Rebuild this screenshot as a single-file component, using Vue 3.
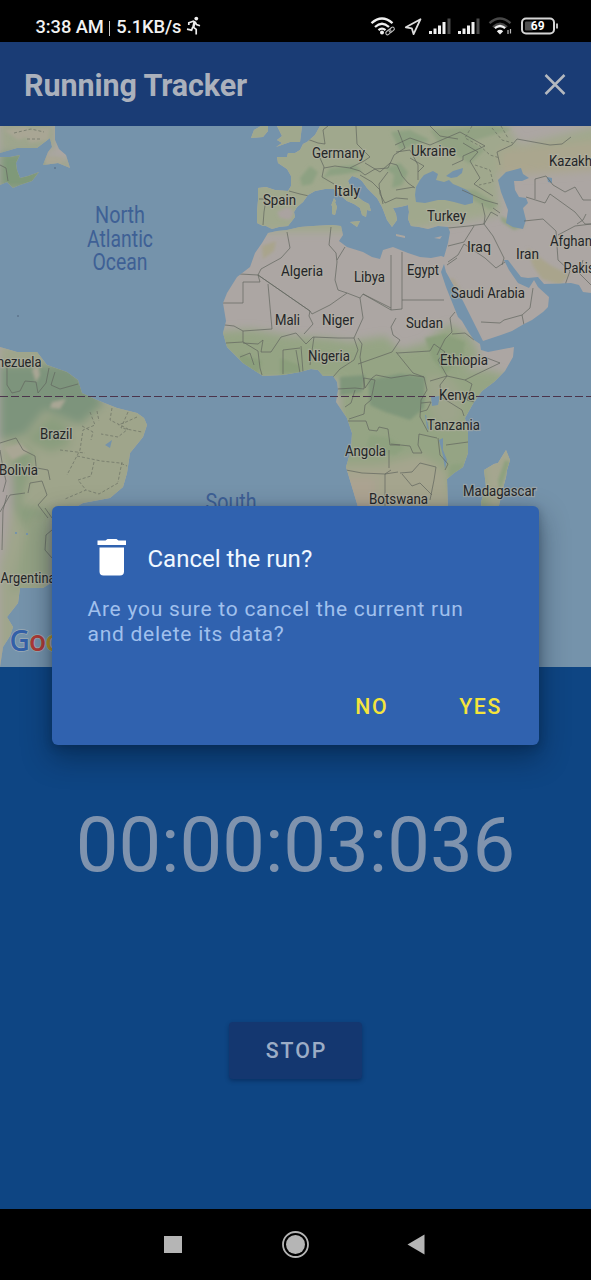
<script setup>
const labels = [
  { t: 'Germany', x: 312, y: 158, w: 53 },
  { t: 'Ukraine', x: 411, y: 156, w: 45 },
  { t: 'Kazakh', x: 549, y: 166, w: 43 },
  { t: 'Italy', x: 334, y: 196, w: 26 },
  { t: 'Spain', x: 263, y: 205, w: 33 },
  { t: 'Turkey', x: 427, y: 221, w: 39 },
  { t: 'Iraq', x: 467, y: 252, w: 24 },
  { t: 'Iran', x: 516, y: 259, w: 23 },
  { t: 'Afghan', x: 550, y: 246, w: 42 },
  { t: 'Pakis', x: 563.5, y: 273, w: 31 },
  { t: 'Algeria', x: 281, y: 276, w: 42 },
  { t: 'Libya', x: 354, y: 282, w: 31 },
  { t: 'Egypt', x: 407, y: 275, w: 32 },
  { t: 'Saudi Arabia', x: 451, y: 298, w: 74 },
  { t: 'Mali', x: 275, y: 325, w: 25 },
  { t: 'Niger', x: 322, y: 325, w: 32 },
  { t: 'Sudan', x: 406, y: 328, w: 37 },
  { t: 'Nigeria', x: 308, y: 361, w: 42 },
  { t: 'Ethiopia', x: 440, y: 365, w: 48 },
  { t: 'Kenya', x: 439, y: 400, w: 36 },
  { t: 'Tanzania', x: 427, y: 430, w: 53 },
  { t: 'Angola', x: 345, y: 456, w: 41 },
  { t: 'Madagascar', x: 463, y: 496, w: 73 },
  { t: 'Botswana', x: 369, y: 504, w: 59 },
  { t: 'nezuela', x: -3, y: 367, w: 44.5 },
  { t: 'Brazil', x: 40, y: 439, w: 32.5 },
  { t: 'Bolivia', x: -1, y: 475, w: 39 },
  { t: 'Argentina', x: 0.5, y: 583, w: 55 },
]
const bars = [
  { x: 0, h: 3 },
  { x: 4.5, h: 5.5 },
  { x: 9, h: 8.5 },
  { x: 13.5, h: 12 },
  { x: 18.5, h: 15.5, off: true },
]
</script>

<template>
  <div class="phone">
    <header class="status">
      <span class="clock">3:38 AM<i></i>5.1KB/s</span>
      <svg class="runner" width="16" height="20" viewBox="0 0 16 20" fill="none" stroke="#eee" stroke-width="1.7">
        <circle cx="10.3" cy="2.6" r="1.9" fill="#eee" stroke="none" />
        <path d="M2.8 9V6.8L7.4 5.2 9.4 6.4 10.5 8.6 14 9.7M8.2 5.6 7 11 10.2 13.4V18.6M6.6 11.2 5.6 14.2 1 13.2M8.6 7 7.8 11" />
      </svg>
      <svg class="indicators" width="190" height="22" viewBox="0 0 190 22">
        <g fill="none" stroke="#f0f0f0" stroke-width="2.3">
          <path d="M1.5 7.2Q12-2.2 22.5 7.2M5 11Q12 4.6 19 11M8.5 14.2Q12 11 15.5 14.2" />
          <g stroke-width="1.1" stroke="#bbb">
            <rect x="-3" y="-1.6" width="6" height="3.4" rx="1.7" transform="translate(18.4 16.1) rotate(-40)" />
            <rect x="-3" y="-1.6" width="6" height="3.4" rx="1.7" transform="translate(21.6 13.6) rotate(-40)" />
          </g>
        </g>
        <circle cx="12" cy="16.6" r="2" fill="#f0f0f0" />
        <path d="M50.5 3.2 35.8 11.3 41.8 12.3 43.6 18.2Z" fill="none" stroke="#ddd" stroke-width="1.8" stroke-linejoin="round" />
        <g v-for="s in [59, 88]" :key="s" :transform="`translate(${s} 0)`">
          <rect v-for="b in bars" :key="b.x" :x="b.x" :y="18 - b.h" width="3" :height="b.h" :fill="b.off ? '#4a4a4a' : '#f0f0f0'" />
        </g>
        <g fill="none" stroke-width="2.3">
          <path d="M119.500 7.200Q130-2.200 140.500 7.200M123 11Q130 4.600 137 11" stroke="#484848" />
          <path d="M124.800 12.200Q130 7.800 135.200 12.200" stroke="#eee" />
          <path d="M138 14V18M140.500 13V17.500" stroke="#bbb" stroke-width="1.2" />
        </g>
        <path d="M126.800 15.200Q130 12.500 133.200 15.200L130 18.500Z" fill="#eee" />
        <rect x="152" y="2.500" width="32" height="15" rx="4" fill="none" stroke="#d5d5d5" stroke-width="2" />
        <rect x="155" y="5.500" width="8" height="9" rx="1" fill="#505050" />
        <path d="M187 7.500V12.500" stroke="#ddd" stroke-width="1.700" />
        <text x="167.700" y="14.400" text-anchor="middle" class="battery">69</text>
      </svg>
    </header>

    <div class="toolbar">
      <h1>Running Tracker</h1>
      <svg width="24" height="24" viewBox="0 0 24 24"><path d="M2.500 2 21.500 21M21.500 2 2.500 21" stroke="#b4b9bf" stroke-width="2.500" /></svg>
    </div>

    <svg class="map" width="591" height="541" viewBox="0 126 591 541">
      <defs>
        <clipPath id="land">
          <path d="M268 233 277 231 287 230 300 227 313 226 332 225 341 226 343 235 339 241 347 247 363 252 372 257 380 259 383 250 393 247 408 253 420 257 431 258 441 256 444 257 448 243 450 232 448 227 438 226 428 229 419 227 411 226 408 219 409 212 408 205 400 207 393 208 396 214 397 220 392 227 387 220 384 212 382 207 377 198 372 193 367 188 362 181 358 178 352 176 348 181 352 190 358 197 363 201 369 204 371 211 367 210 366 217 362 215 360 208 354 204 347 201 340 195 334 189 325 189 315 191 308 195 303 202 297 207 294 212 295 217 288 226 279 227 272 229 266 226 263 226 257 223 257 212 258 200 258 188 266 187 275 190 288 191 291 186 291 176 287 169 278 163 277 157 287 157 288 153 295 153 300 150 303 144 307 142 315 135 320 126H591V293L583 292 579 285 571 283 544 284 538 277 528 278 521 277 514 268 508 260 504 260 509 270 518 283 529 288 534 280 538 287 549 297 548 307 543 312 532 320 524 324 512 331 501 335 483 341 480 335 475 325 469 313 463 301 458 293 446 272 444 264 441 272 446 287 454 307 458 317 462 321 469 333 474 340 480 344 481 350 488 352 514 347 513 357 505 371 494 382 482 391 474 402 465 418 468 433 468 453 463 467 454 473 447 479 448 510V560H370L358 507 352 487 346 467 351 450 352 433 347 418 336 402 338 390 337 382 333 376 323 376 318 370 311 369 300 372 283 375 263 376 243 363 227 347 223 333 226 321 223 303 227 293 237 277 250 267 255 253 262 243Z" />
          <path d="M0 347 17 352 37 352 47 365 67 372 78 380 82 393 97 400 117 408 137 413 144 418 147 425 143 437 130 453 127 473 123 487 110 498 83 503 67 512V583H51L43 588H20L18 603 7 617 13 627 10 636 3 647 0 667Z" />
          <path d="M0 126H55V140L59 149 66 155 70 168 58 163 43 165 48 152 52 147 50 138 37 148 17 148 0 153ZM0 157 10 157 20 155 16 163 17 170 20 178 28 176 39 172 32 181 20 185 13 188 7 182 0 185Z" />
          <path d="M251 138 254 130 261 126H268L268 131 263 137ZM277 126H302L301 134 300 142 290 142 276 147 282 143 277 140 282 136Z" />
          <path d="M332 204 335 202 337 207 335 215 332 214ZM350 222 360 221 357 227ZM331 206 334 198 336 201ZM396 234 405 236V238L396 236ZM434 238 442 236 440 239Z" />
          <path d="M506 450 510 460 507 470 506 477 502 492 498 510H482L481 502 486 487 484 470 494 464 498 463Z" />
        </clipPath>
        <filter id="soft" x="-20%" y="-20%" width="140%" height="140%"><feGaussianBlur stdDeviation="4" /></filter>
        <filter id="soft2" x="-20%" y="-20%" width="140%" height="140%"><feGaussianBlur stdDeviation="1.800" /></filter>
      </defs>
      <rect y="126" width="591" height="541" fill="#7593ab" />
      <g clip-path="url(#land)">
        <rect y="126" width="591" height="541" fill="#aca6a3" />
        <g filter="url(#soft)">
          <path d="M200 115H500L520 145 600 125V165L520 165 498 172 500 215 460 222 400 232 330 232 250 232Z" fill="#a0a88d" />
          <path d="M500 150 600 140V170L500 176Z" fill="#aaa68e" />
          <path d="M200 333 250 329 290 336 330 338 350 342 385 336 400 350 425 343 440 330 450 324 470 336 480 355 465 370 490 370 520 380V560H340V380L200 380Z" fill="#95a484" />
          <path d="M425 375 450 378 462 395 460 420 440 430 430 405Z" fill="#9da48b" />
          <path d="M320 466 380 465 420 455 445 470 455 520H340Z" fill="#a5a58e" />
          <path d="M345 478H375V515H350Z" fill="#aca391" />
          <path d="M0 345H60L95 400 155 405V500L50 520V600L0 680Z" fill="#9fa58b" />
          <path d="M0 365H70L105 402 80 425 45 410 25 435 0 440Z" fill="#7d947b" />
          <path d="M50 415 68 425 70 445 50 452 25 440ZM15 440 35 455 20 505 55 510 25 530 10 500Z" fill="#8a9d7e" />
          <path d="M-2 465 12 475 13 500 5 550-2 570Z" fill="#aaa3a0" />
          <path d="M30 515 52 520V580L10 592Z" fill="#94a284" />
          <path d="M0 120H55V150H0ZM40 160H75V170H40Z" fill="#9da58c" />
          <path d="M0 152H42V190H0Z" fill="#7f9979" />
          <path d="M480 445H515V475L500 510H490Z" fill="#a5a68f" />
        </g>
        <g filter="url(#soft2)">
          <path d="M368 380 400 374 425 377 424 408 410 420 385 412 370 405ZM340 377 365 375 362 392 340 396Z" fill="#7f967a" />
          <path d="M425 338 445 334 465 342 463 356 445 374 433 360ZM240 354 262 361 258 374 240 365ZM280 358 300 365 300 373 280 374Z" fill="#8b9f7c" />
          <path d="M322 180 330 168 355 165 362 171 345 174 328 176ZM300 178 310 166 318 172 312 184 302 186ZM385 168 400 163 408 172 402 185 392 188 394 175ZM400 150 430 140 410 130 391 132Z" fill="#8da182" />
          <path d="M430 130 490 126 512 129 470 142 485 150 470 164 440 145ZM457 190 475 190 498 205 490 210ZM500 216 525 226 514 230 502 222Z" fill="#92a283" />
          <path d="M277 212 288 207 294 212 290 220 280 218Z" fill="#aaa3a0" />
          <path d="M262 246 276 241 274 251 263 259ZM527 248 550 265 570 275 560 285 542 279 533 266Z" fill="#a9a48c" />
          <path d="M448 278 454 279 462 292 456 290Z" fill="#a9a391" />
          <path d="M370 435 390 438 405 448 395 455 365 450ZM450 465 464 463 460 475 448 490ZM505 460 510 462 500 492 498 480Z" fill="#8ea17f" />
          <path d="M4 130 26 127 33 135 18 140ZM22 130 50 128 48 140 30 143ZM46 156 64 158 60 164 45 164ZM4 448 20 443 30 452 12 460ZM52 402 66 399 60 409 50 408ZM32 370 38 365 40 375 36 382Z" fill="#a9a694" />
        </g>
        <g fill="#7593ab">
          <path d="M416 202 415 195 416 187 420 180 424 175 433 171 438 174 436 180 444 182 449 180 453 184 458 186 467 190 473 195 473 203 465 205 454 202 445 200 438 200 425 203ZM446 176 453 171 463 168 462 173 457 177 451 178ZM498 180 506 172 521 168 523 174 529 178 522 181 514 181 515 190 519 197 526 198 528 203 523 208 526 220 523 229 513 227 506 223 508 210 501 192ZM547 177 552 178 552 183 548 182Z" />
          <path d="M431 397 440 396 438 405 432 406ZM439 440 443 438 443 450 447 460 445 469 443 456ZM425 415 426 415 429 430 427 428ZM15 532H17V534H15ZM26 533H28V535H26ZM105 445 112 440 110 448Z" />
        </g>
        <g class="borders">
          <path d="M287 232 290 248 281 258 270 264 261 269 258 275 260 282H243V303L223 303M240 274 258 275 310 311 312 314 330 305 347 293 360 298 363 294 391 308M331 227 329 245 336 253 337 262 335 280 338 290 347 293M345 247 337 260M363 294 391 310V255M258 275 310 311 309 316 313 324 304 334M268 284 272 329 243 331M360 298 363 318 354 338 338 338 313 337 306 344 296 333 281 337 271 352 261 352 263 340 258 344 243 343M391 310 402 309V252M402 300H444" />
          <path d="M225 325 234 326 243 331 243 342 226 343M243 342 258 351 260 368 262 375M240 357 250 353 254 365M283 374V350L300 348M296 350 300 373M301 346 303 372M314 337 310 365M354 338 358 350 354 360 340 369 333 377M358 338 362 344 360 357 365 388 372 378 376 375 391 378M358 364 392 352 400 340 393 335 391 327 396 318M337 389 355 388 364 389 364 378 375 380 371 400 365 405 364 414 349 419M348 421H366L369 430 377 431 379 427 388 429 390 445H400M345 407 351 403 355 390M346 470 362 473 385 474 398 472M385 510V474L391 470M389 450V468M391 444 410 446 413 453 422 453 418 445 419 434 437 438" />
          <path d="M396 352 413 373 424 377 427 390 421 400 420 417 428 432M391 378 410 375 424 377M397 353 430 351 434 344 445 352 438 360 447 376 465 380 475 375 500 363 487 358M452 334 465 333 474 340M437 355 445 339 452 332 450 318 455 312M447 376 440 385 441 397 462 410 464 416M465 380 472 384 467 400 474 402M430 381 447 376M446 445 468 442M438 438 440 455 448 464 445 470M400 473 412 472 420 463 436 467 434 480 430 500M402 474 412 486 420 483 432 495M421 403 431 402 427 410 420 412" />
          <path d="M259 199 266 199 264 212 263 225M289 191 300 194 309 196M307 139 318 143 325 144 323 130 328 126M320 158 324 167 322 177 334 184M324 168 335 166 350 168 364 161 370 157 357 144 356 126M350 168 360 171 365 175 375 169 388 168 394 155 405 148 398 130M365 163 380 172 390 163 397 165 402 176 408 183 415 188M360 175 372 182 380 190 383 204M388 172 379 184 380 194 385 203 396 198 408 199M396 190 414 187M396 152 410 150 418 165 418 180M410 158 424 166 418 172M395 145 410 138 430 145 460 132 485 146 463 156 463 160 452 165M430 126 440 136 458 139" />
          <path d="M463 143 478 152 470 161 480 178 474 184 493 196M500 165 497 152 512 145 517 139 550 145 562 144 571 137M462 190 484 200 498 204M482 203 485 216 484 224 493 236 499 248 504 258 502 265M448 228 469 226 484 224M448 246 464 242 474 226M448 262 458 255 464 244 485 258 496 268 505 262M447 265 457 258M484 224 491 212 498 216M493 208 500 213" />
          <path d="M535 199V179L546 176 553 185 565 192 575 187 583 200H591M526 197 545 203 550 194 575 212 585 224H591M524 221 543 219 556 231 558 260 570 271 565 285M558 235 575 226 591 224M583 260 579 273 591 285M504 320 522 315 530 308 533 288M481 322 500 323 504 320M522 315 524 325M577 224 583 220 586 214" />
          <path d="M7 367V385L12 393 20 391 25 381 36 382 38 393 46 383 49 368M55 372 51 385 60 389 78 384M0 443 16 438 23 450 35 456 37 475M0 450 3 468 6 481 3 492M37 468 48 470 50 480M45 508 52 518M28 493 30 483 42 481 47 495 38 505 48 518M0 512 10 495 25 493M7 495 3 510 2 550M52 530 46 535 45 550 52 558M0 165 6 168 8 181" />
        </g>
        <g class="regions">
          <path d="M90 412 95 425 83 430 80 450 67 475M112 408 110 420 128 429 118 437 101 434M128 412 121 428 142 432M97 411 99 421M82 426 93 432 91 440M77 456 101 461 120 463 127 466M94 462 91 476 78 480 86 490 65 499M118 483 99 494 86 490M122 462 118 482M60 450 85 453M137 417 126 422 118 425M472 126 465 138 480 146 490 155 500 158M475 165 490 170 493 182 479 185M492 128 502 140 513 143M501 126 508 138M14 133 31 129 44 132M27 139 40 139" />
        </g>
      </g>
      <path d="M0 396.500H435M476 396.500H591" stroke="#4b344b" stroke-width="1" stroke-dasharray="8 3" />
      <path d="M17 316H19M54 168H56" stroke="#52647c" />
      <g class="ocean">
        <text x="95" y="223" textLength="50" lengthAdjust="spacingAndGlyphs">North</text>
        <text x="87" y="246.500" textLength="66" lengthAdjust="spacingAndGlyphs">Atlantic</text>
        <text x="92.500" y="270" textLength="55" lengthAdjust="spacingAndGlyphs">Ocean</text>
        <text x="205.500" y="510" textLength="51" lengthAdjust="spacingAndGlyphs">South</text>
      </g>
      <g class="places">
        <text v-for="l in labels" :key="l.t" :x="l.x" :y="l.y" :textLength="l.w" lengthAdjust="spacingAndGlyphs">{{ l.t }}</text>
      </g>
      <g class="google">
        <text x="9.500" y="650.500"><tspan fill="#3360a8">G</tspan><tspan fill="#ad3a35">o</tspan><tspan fill="#b79127">o</tspan></text>
      </g>
    </svg>

    <main class="panel">
      <div class="timer">00:00:03:036</div>
      <button class="stop">STOP</button>
    </main>

    <nav class="nav">
      <svg width="591" height="71" viewBox="0 0 591 71" fill="#b5b5b5">
        <rect x="164" y="27" width="18" height="17" />
        <circle cx="295.500" cy="35.500" r="9.500" />
        <circle cx="295.500" cy="35.500" r="12.500" fill="none" stroke="#b5b5b5" stroke-width="1.800" />
        <path d="M407.500 35.500 424.500 25.500V45.500Z" />
      </svg>
    </nav>

    <section class="dialog">
      <div class="heading">
        <svg width="30" height="38" viewBox="0 0 30 38" fill="#fff">
          <path d="M.500 2.500H8.500L10.500 1H19.500L21.500 2.500H29V7H.500ZM2.500 9.500H27V33.500Q27 37.500 23 37.500H6.500Q2.500 37.500 2.500 33.500Z" />
        </svg>
        <h2>Cancel the run?</h2>
      </div>
      <p>Are you sure to cancel the current run<br />and delete its data?</p>
      <div class="actions"><button>NO</button><button>YES</button></div>
    </section>
  </div>
</template>

<style>
body { margin: 0; background: #000; }
</style>

<style scoped>
.phone { position: relative; width: 591px; height: 1280px; display: flex; flex-direction: column; overflow: hidden; font-family: Roboto, sans-serif; }
button { border: 0; padding: 0; background: none; font: inherit; }
.status { height: 42px; flex: none; background: #000; display: flex; align-items: flex-start; box-sizing: border-box; padding: 16px 31px 0 35.500px; }
.clock { font-size: 18.300px; line-height: 22px; font-weight: 500; letter-spacing: -.05px; color: #f2f2f2; white-space: nowrap; display: flex; align-items: center; }
.clock i { width: 1.500px; height: 15px; margin: 2px 6px 0 5px; background: #ccc; }
.runner { margin: 0 0 0 5px; }
.indicators { margin-left: auto; }
.battery { font: 700 12px Roboto, sans-serif; fill: #fff; }
.toolbar { height: 84px; flex: none; background: #1a3c75; display: flex; align-items: center; justify-content: space-between; box-sizing: border-box; padding: 2px 24px 0; }
.toolbar h1 { margin: 1px 0 0; font-size: 30.500px; font-weight: 700; line-height: 36px; letter-spacing: -.1px; color: #abb1bc; }
.map { display: block; flex: none; }
.borders { fill: none; stroke: #62665f; stroke-width: .7; stroke-linejoin: round; }
.regions { fill: none; stroke: #6c7164; stroke-width: .7; stroke-dasharray: 3 2; }
.ocean { font-size: 23px; fill: #3e6095; }
.places { font-size: 14px; fill: #242628; stroke: rgba(180, 178, 166, .55); stroke-width: 2.500px; paint-order: stroke; }
.google { font: 600 28px "Open Sans", sans-serif; stroke: #9eacb5; stroke-width: 1.500px; paint-order: stroke; letter-spacing: -.8px; }
.panel { height: 542px; flex: none; background: #0e4583; display: flex; flex-direction: column; align-items: center; }
.timer { margin-top: 134px; font-size: 76px; line-height: 89px; color: #7f93ae; white-space: nowrap; }
.stop { margin-top: 132px; width: 133px; height: 57px; border-radius: 4px; background: #143770; color: #9cadc6; font-size: 21.300px; font-weight: 500; letter-spacing: 1.900px; padding-left: 2px; box-shadow: 0 2px 4px rgba(0, 20, 55, .4); }
.nav { height: 71px; flex: none; background: #000; }
.nav svg { display: block; }
.dialog { position: absolute; left: 51.500px; top: 506px; width: 487.500px; height: 238.500px; box-sizing: border-box; border-radius: 6px; background: #3062af; padding: 32px 26px 0 36px; box-shadow: 0 12px 28px 2px rgba(0, 20, 40, .4), 0 2px 8px rgba(0, 20, 40, .25); }
.heading { display: flex; align-items: center; gap: 21px; padding-left: 9px; height: 38px; }
.heading h2 { margin: 3px 0 0; font-size: 24px; font-weight: 400; color: #f0f8ff; line-height: 30px; white-space: nowrap; }
.dialog p { margin: 20.500px 0 0; font-size: 21px; line-height: 25.500px; letter-spacing: .74px; color: #a0c0ed; white-space: nowrap; }
.actions { display: flex; justify-content: flex-end; gap: 71px; margin-top: 45.500px; padding-right: 11px; }
.actions button { font-size: 21.300px; line-height: 28px; font-weight: 500; letter-spacing: 1.600px; color: #f4e43c; }
</style>
